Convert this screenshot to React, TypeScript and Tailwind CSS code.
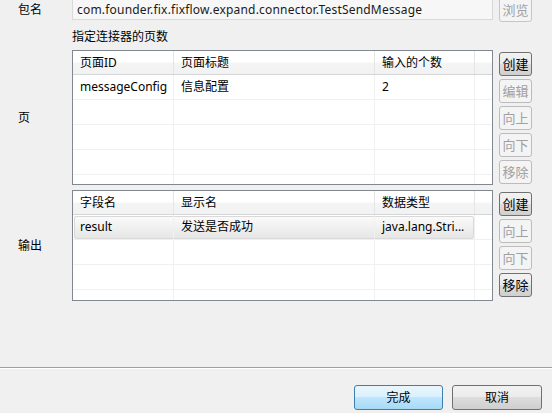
import React from "react";

type Btn = { label: string; enabled: boolean };

const SideButton = ({ label, enabled }: Btn) => (
  <button
    className={
      enabled
        ? "w-[33px] h-[24px] rounded-[3px] border border-[#707070] bg-[linear-gradient(#f2f2f2_0%,#ebebeb_50%,#dddddd_50%,#cfcfcf_100%)] text-[13px] text-black leading-none"
        : "w-[33px] h-[24px] rounded-[3px] border border-[#bcbcbc] bg-[#f4f4f4] text-[13px] text-[#a0a0a0] leading-none"
    }
  >
    {label}
  </button>
);

type Cell = string;

const Table = ({
  headers,
  rows,
  height,
  selected,
}: {
  headers: string[];
  rows: Cell[][];
  height: string;
  selected?: number;
}) => {
  const widths = ["w-[101px]", "w-[201px]", "w-[100px]", "w-[17px]"];
  const emptyRows = 5;
  return (
    <div className={`w-[421px] ${height} border border-[#828790] bg-white overflow-hidden`}>
      {/* header */}
      <div className="flex h-[24px] border-b border-[#d5d5d5] bg-[linear-gradient(#ffffff_0%,#ffffff_45%,#f4f4f4_55%,#f1f2f3_100%)]">
        {widths.map((w, i) => (
          <div
            key={i}
            className={`${w} shrink-0 h-full flex items-center pl-[7px] border-r border-[#e5e5e5] last:border-r-0`}
          >
            {headers[i] ?? ""}
          </div>
        ))}
      </div>
      {/* body */}
      {Array.from({ length: emptyRows }).map((_, r) => {
        const data = rows[r];
        const isSel = selected === r;
        return (
          <div key={r} className="relative flex h-[25px] border-b border-[#f0f0f0]">
            {isSel && (
              <div className="absolute left-[1px] right-[18px] top-[1px] bottom-[0px] rounded-[2px] border border-[#d9d9d9] bg-[linear-gradient(#fafafa,#e6e6e6)]" />
            )}
            {widths.map((w, i) => (
              <div
                key={i}
                className={`${w} shrink-0 h-full relative flex items-center pl-[7px] border-r border-[#f0f0f0] last:border-r-0`}
              >
                {data ? data[i] ?? "" : ""}
              </div>
            ))}
          </div>
        );
      })}
    </div>
  );
};

export default function App() {
  return (
    <div
      className="w-[552px] h-[413px] bg-[#f0f0f0] overflow-hidden flex flex-col text-[12px] text-black"
      style={{ fontFamily: '"Noto Sans", "Noto Sans CJK SC", sans-serif' }}
    >
      {/* 包名 */}
      <div className="flex h-[23px] -mt-[3px] shrink-0">
        <div className="w-[72px] pl-[18px] pt-[5px] leading-[16px]">包名</div>
        <div className="w-[421px] h-[23px] border border-[#d9d9d9] bg-[#f7f7f7] flex items-center pl-[4px] pt-[3px] text-[#1a1a1a] tracking-[0.2px]">
          com.founder.fix.fixflow.expand.connector.TestSendMessage
        </div>
        <div className="ml-[6px] w-[33px] h-[25px] rounded-[3px] border border-[#c6c6c6] bg-[#f4f4f4] text-[13px] text-[#a0a0a0] flex items-center justify-center pt-[3px]">
          浏览
        </div>
      </div>

      {/* caption */}
      <div className="h-[30px] pl-[72px] pt-[9px] leading-[16px] shrink-0">指定连接器的页数</div>

      {/* 页 */}
      <div className="flex h-[135px] shrink-0">
        <div className="w-[72px] pl-[18px] flex items-center">页</div>
        <Table
          headers={["页面ID", "页面标题", "输入的个数", ""]}
          rows={[["messageConfig", "信息配置", "2", ""]]}
          height="h-[135px]"
        />
        <div className="ml-[6px] pt-[2px] flex flex-col gap-[3px]">
          <SideButton label="创建" enabled />
          <SideButton label="编辑" enabled={false} />
          <SideButton label="向上" enabled={false} />
          <SideButton label="向下" enabled={false} />
          <SideButton label="移除" enabled={false} />
        </div>
      </div>

      {/* 输出 */}
      <div className="flex h-[111px] mt-[5px] shrink-0">
        <div className="w-[72px] pl-[18px] flex items-center">输出</div>
        <Table
          headers={["字段名", "显示名", "数据类型", ""]}
          rows={[["result", "发送是否成功", "java.lang.Stri...", ""]]}
          height="h-[111px]"
          selected={0}
        />
        <div className="ml-[6px] pt-[2px] flex flex-col gap-[3px]">
          <SideButton label="创建" enabled />
          <SideButton label="向上" enabled={false} />
          <SideButton label="向下" enabled={false} />
          <SideButton label="移除" enabled />
        </div>
      </div>

      {/* separator */}
      <div className="mt-[66px] h-[1px] bg-[#a0a0a0] shrink-0" />
      <div className="h-[1px] bg-white shrink-0" />

      {/* footer */}
      <div className="mt-[16px] flex justify-end gap-[9px] pr-[10px]">
        <button className="w-[89px] h-[25px] rounded-[3px] border border-[#3c7fb1] bg-[linear-gradient(#eaf6fd_0%,#d9f0fc_50%,#bee6fd_50%,#a7d9f5_100%)] leading-none">
          完成
        </button>
        <button className="w-[90px] h-[25px] rounded-[3px] border border-[#707070] bg-[linear-gradient(#f2f2f2_0%,#ebebeb_50%,#dddddd_50%,#cfcfcf_100%)] leading-none">
          取消
        </button>
      </div>
    </div>
  );
}
